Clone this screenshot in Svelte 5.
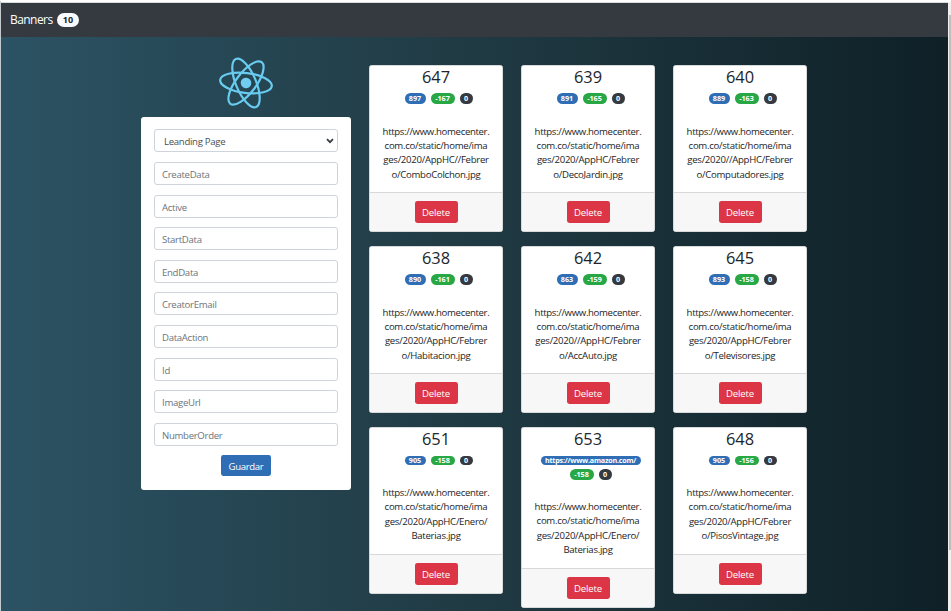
<script>
  const fields = ['CreateData', 'Active', 'StartData', 'EndData', 'CreatorEmail', 'DataAction', 'Id', 'ImageUrl', 'NumberOrder'];
  const host = ['https://www.homecenter.', 'com.co/static/home/ima'];
  const columns = [
    [
      { id: 647, ref: '897', order: '-167', url: ['ges/2020/AppHC//Febrer', 'o/ComboColchon.jpg'] },
      { id: 638, ref: '890', order: '-161', url: ['ges/2020/AppHC/Febrer', 'o/Habitacion.jpg'] },
      { id: 651, ref: '905', order: '-158', flat: true, url: ['ges/2020/AppHC/Enero/', 'Baterias.jpg'] }
    ],
    [
      { id: 639, ref: '891', order: '-165', url: ['ges/2020/AppHC/Febrer', 'o/DecoJardin.jpg'] },
      { id: 642, ref: '863', order: '-159', url: ['ges/2020//AppHC/Febrer', 'o/AccAuto.jpg'] },
      { id: 653, ref: 'https://www.amazon.com/', order: '-158', flat: true, long: true, url: ['ges/2020/AppHC/Enero/', 'Baterias.jpg'] }
    ],
    [
      { id: 640, ref: '889', order: '-163', url: ['ges/2020//AppHC/Febrer', 'o/Computadores.jpg'] },
      { id: 645, ref: '893', order: '-158', url: ['ges/2020/AppHC/Febrer', 'o/Televisores.jpg'] },
      { id: 648, ref: '905', order: '-156', flat: true, url: ['ges/2020/AppHC/Febrer', 'o/PisosVintage.jpg'] }
    ]
  ];
</script>

<div class="page">
  <div class="view">
    <nav><span class="brand">Banners</span><span class="count">10</span></nav>
    <main>
      <aside>
        <svg class="logo" viewBox="0 0 54 52" width="54" height="52" fill="none" stroke="#68cbf0" stroke-width="2.2">
          <g transform="translate(27 26) rotate(7)">
            <ellipse rx="26" ry="10" />
            <ellipse rx="26" ry="10" transform="rotate(60)" />
            <ellipse rx="26" ry="10" transform="rotate(120)" />
            <circle r="5.3" fill="#70cef2" stroke="none" />
          </g>
        </svg>
        <form onsubmit={(e) => e.preventDefault()}>
          <div class="control select">
            <span>Leanding Page</span>
            <svg width="8" height="6" viewBox="0 0 8 6"><path d="M1 1.2 4 4.2 7 1.2" fill="none" stroke="#343a40" stroke-width="1.7" /></svg>
          </div>
          {#each fields as field}
            <input class="control" placeholder={field} />
          {/each}
          <button class="save">Guardar</button>
        </form>
      </aside>
      <div class="cards">
        {#each columns as column}
          <div class="column">
            {#each column as card}
              <article class:flat={card.flat} class:long={card.long}>
                <div class="body">
                  <h2>{card.id}</h2>
                  <div class="badges">
                    <span class="badge blue">{card.ref}</span>
                    <span class="badge green">{card.order}</span>
                    <span class="badge dark">0</span>
                  </div>
                  <p>{#each [...host, ...card.url] as line}<span>{line}</span>{/each}</p>
                </div>
                <footer><button>Delete</button></footer>
              </article>
            {/each}
          </div>
        {/each}
      </div>
    </main>
  </div>
  <div class="scroll"><div class="thumb"></div></div>
</div>

<style>
  :global(body) { margin: 0; overflow: hidden; background: #fff; }
  * { box-sizing: border-box; }
  .page {
    width: 951px; height: 611px; border-top: 2px solid #fff; border-left: 1px solid #c3cbcf; overflow: hidden;
    display: flex; background: #d4d8dc;
    font-family: "Open Sans", "Noto Sans", sans-serif; font-size: 9.6px; line-height: 14.4px; color: #212529;
  }
  .view {
    width: 947px; height: 609px; flex: none; overflow: hidden; border-top: 1px solid #d9dade;
    background: linear-gradient(to right, #2c5364, #203a43 50%, #0f2027);
  }
  nav { height: 33.5px; padding: 0 9px; display: flex; align-items: center; background: #343a40; }
  .brand { color: #fff; font-size: 12px; letter-spacing: -0.56px; width: 43px; padding-top: 1px; }
  .count {
    margin-left: 4px; width: 22px; height: 14px; border-radius: 7px; background: #f8f9fa; color: #212529;
    font-size: 9px; font-weight: 700; line-height: 14px; text-align: center;
  }
  main { display: flex; align-items: flex-start; padding: 0.5px 0 0 140px; }
  aside { width: 210px; padding-top: 20px; display: flex; flex-direction: column; align-items: center; }
  .logo { display: block; flex: none; }
  form {
    width: 210px; height: 373px; margin-top: 8px; padding: 12.4px 13px 0; border-radius: 3px; background: #fff;
    display: flex; flex-direction: column; align-items: center; gap: 9.6px;
  }
  .control {
    width: 184px; height: 23px; flex: none; margin: 0; padding: 2px 7px 0; outline: 0;
    border: 1px solid #ced4da; border-radius: 3px; background: #fff;
    font: inherit; color: #495057; letter-spacing: -0.3px;
  }
  .control::placeholder { color: #6c757d; opacity: 1; }
  .select { display: flex; align-items: center; justify-content: space-between; padding: 2px 3px 0 9px; }
  .select svg { margin-top: -2px; }
  button {
    font: inherit; color: #fff; border: 0; border-radius: 2.4px; padding: 2px 0 0; margin: 0;
    background: #dc3545; width: 43px; height: 22px; font-weight: 500; display: block; letter-spacing: -0.2px;
  }
  .save { width: 50px; height: 21px; flex: none; background: #2f6eb5; letter-spacing: -0.35px; }
  .cards { display: flex; gap: 18px; padding: 28px 0 0 18px; }
  .column { display: flex; flex-direction: column; gap: 14.4px; }
  article {
    width: 134px; height: 166.6px; border: 1px solid #d6dadb; border-radius: 2.5px; background: #fff;
    display: flex; flex-direction: column; overflow: hidden; text-align: center;
  }
  .body { flex: 1; min-height: 0; }
  h2 { margin: 1.6px 0 0; font-size: 16.4px; line-height: 18px; font-weight: 500; }
  .badges {
    margin-top: 7.4px; height: 11px; padding-left: 5px;
    display: flex; flex-wrap: wrap; justify-content: center; gap: 4px 5px;
  }
  .badge {
    height: 11px; line-height: 11px; border-radius: 6px; color: #fff; overflow: hidden;
    font-size: 7.2px; font-weight: 700; white-space: nowrap;
  }
  .blue { width: 21px; background: #2f6eb5; }
  .green { width: 24px; background: #28a745; }
  .dark { width: 13px; background: #343a40; }
  p { margin: 20.6px 0 0; white-space: nowrap; letter-spacing: -0.28px; }
  p span { display: block; }
  p span:first-child { letter-spacing: -0.34px; }
  footer {
    height: 38.2px; flex: none; padding-top: 8px; border-top: 1px solid #d8d8d8; background: #f7f7f7;
    display: flex; justify-content: center;
  }
  .flat .badges { margin-top: 8.4px; height: 9px; }
  .flat .badge { height: 9px; line-height: 9px; }
  .flat p { margin-top: 21px; }
  .long { height: 180.6px; }
  .long .badges { height: 23px; }
  .long .blue { width: 100px; margin: 0 10px; letter-spacing: -0.22px; }
  .long .green, .long .dark { height: 11px; line-height: 11px; }
  .scroll { width: 3px; height: 609px; flex: none; padding: 13px 0 0 1px; background: #f1f0ef; }
  .thumb { height: 535px; background: #c1bfbe; }
</style>
